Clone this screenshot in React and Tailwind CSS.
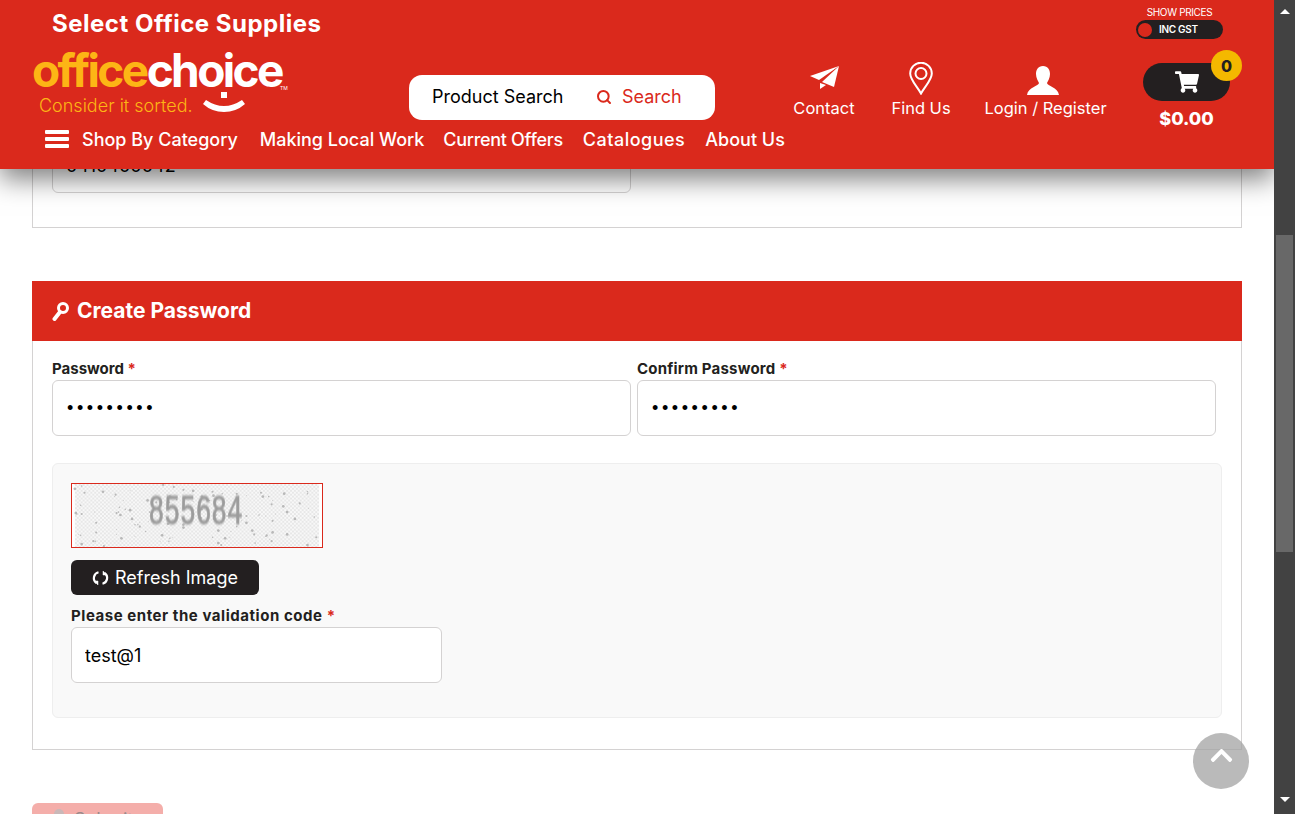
import { FaShoppingCart, FaChevronUp } from 'react-icons/fa';
import { Search } from 'lucide-react';

const font = "font-['Inter','Open_Sans',sans-serif]";

// seeded specks for the captcha noise
const specks = Array.from({ length: 120 }, (_, i) => ({
  x: (i * 97 + (i * i) % 41) % 252,
  y: (i * 53 + (i * i * 3) % 29) % 65,
  r: 0.5 + (i % 4) * 0.3,
}));

const Logo = () => (
  <div className="relative w-[262px] h-[66px] shrink-0">
    <div className="absolute left-0 top-[-8px] text-[46px] leading-[44px] font-bold tracking-[-2.6px] whitespace-nowrap">
      <span className="text-[#fdb515]">office</span>
      <span className="text-white">choice</span>
    </div>
    <span className="absolute left-[248px] top-[29px] text-[5px] leading-[6px] text-white">TM</span>
    <div className="absolute left-[7px] top-[38px] text-[18px] leading-[24px] font-light text-[#fdb515] whitespace-nowrap">
      Consider it sorted.
    </div>
    <svg className="absolute left-[170px] top-[36px]" width="44" height="22" viewBox="0 0 44 22">
      <rect x="19" y="0" width="6" height="6" fill="#fff" />
      <path d="M4 8 Q22 20 40 8 L43 12 Q34 20 22 20 Q10 20 1 12 Z" fill="#fff" />
    </svg>
  </div>
);

const HeaderLink = ({ icon, label, className = '' }) => (
  <div className={`flex flex-col items-center text-white text-[16.5px] leading-[22px] ${className}`}>
    <div className="h-[32px] flex items-end justify-center">{icon}</div>
    <span className="mt-[1px] whitespace-nowrap">{label}</span>
  </div>
);

const Field = ({ label, type = 'text', value, className = '', labelClass = '' }) => (
  <div className={className}>
    <label className={`block text-[15px] leading-[22px] font-bold text-[#231f20] ${labelClass}`}>
      {label} <span className="text-[#da291c]">*</span>
    </label>
    <input
      readOnly
      type={type}
      value={value}
      className={
        type === 'password'
          ? "block w-full h-[56px] px-[14px] rounded-[6px] border border-[#d4d2d2] bg-white font-['Liberation_Sans',sans-serif] text-[18px] tracking-[3.6px] text-black outline-none"
          : 'block w-full h-[56px] px-[13px] rounded-[6px] border border-[#d4d2d2] bg-white text-[18px] text-black outline-none'
      }
    />
  </div>
);

const Captcha = () => (
  <svg className="block border border-[#da291c] bg-white" width="252" height="65" viewBox="0 0 252 65">
    <defs>
      <pattern id="grain" width="4" height="4" patternUnits="userSpaceOnUse">
        <rect width="4" height="4" fill="#f8f8f8" />
        <circle cx="1" cy="1" r="0.9" fill="#e0e0e0" />
        <circle cx="3" cy="3" r="0.9" fill="#e0e0e0" />
      </pattern>
      <filter id="soft"><feGaussianBlur stdDeviation="0.6" /></filter>
    </defs>
    <rect width="252" height="65" fill="url(#grain)" />
    {specks.map((s, i) => (
      <circle key={i} cx={s.x} cy={s.y} r={s.r} fill="#b8b8b8" />
    ))}
    <text
      transform="translate(76 41) scale(1 1.65)"
      filter="url(#soft)"
      fontFamily="'Liberation Mono', monospace"
      fontSize="27"
      fill="#9c9c9c"
      stroke="#9c9c9c"
      strokeWidth="0.6"
    >
      855684
    </text>
  </svg>
);

const Header = () => (
  <header className="absolute inset-x-0 top-0 h-[169px] bg-[#da291c] shadow-[0_10px_25px_rgba(0,0,0,0.5)] z-10">
    <div className="flex items-start justify-between h-[48px]">
      <h1 className="ml-[52px] mt-[9px] text-[24px] leading-[30px] font-bold text-white tracking-[0.5px]">Select Office Supplies</h1>
      <div className="mr-[51px] mt-[6px] w-[87px] flex flex-col items-center">
        <span className="text-[10px] leading-[12px] text-white tracking-[-0.35px] whitespace-nowrap">SHOW PRICES</span>
        <div className="mt-[2px] w-[87px] h-[19px] rounded-full bg-[#231f20] flex items-center pl-[2px]">
          <span className="w-[14px] h-[14px] rounded-full bg-[#da291c]" />
          <span className="ml-[7px] text-[10px] font-semibold text-white tracking-[-0.3px]">INC GST</span>
        </div>
      </div>
    </div>

    <div className="flex items-start h-[78px]">
      <div className="ml-[32px] mt-[8px]"><Logo /></div>
      <div className="ml-[115px] mt-[27px] w-[306px] h-[45px] rounded-[13px] bg-white flex items-center text-[18px] shrink-0 pb-[2px]">
        <span className="ml-[23px] w-[164px] text-black whitespace-nowrap">Product Search</span>
        <Search className="text-[#da291c]" size={16} strokeWidth={3} />
        <span className="ml-[10px] text-[#da291c]">Search</span>
      </div>
      <HeaderLink
        className="ml-[77px] mt-[16px] w-[64px]"
        label="Contact"
        icon={
          <svg className="mb-[5px]" width="31" height="26" viewBox="0 0 31 26" fill="#fff">
            <path d="M30 1 L1 11 L10 15 Z" />
            <path d="M30 1 L13 17 L25 22 Z" />
            <path d="M11 18 L11 24 L17 20 Z" />
          </svg>
        }
      />
      <HeaderLink
        className="ml-[38px] mt-[16px] w-[54px]"
        label="Find Us"
        icon={
          <svg className="mb-[1px]" width="24" height="33" viewBox="0 0 24 33" fill="none" stroke="#fff" strokeWidth="2">
            <path d="M12 31.5 C8 24 1.2 18 1.2 11.5 A10.8 10.8 0 0 1 22.8 11.5 C22.8 18 16 24 12 31.5 Z" />
            <circle cx="12" cy="11.5" r="5.5" />
          </svg>
        }
      />
      <HeaderLink
        className="ml-[37px] mt-[16px] w-[121px]"
        label="Login / Register"
        icon={
          <svg className="mb-[1px] mr-[6px]" width="32" height="29" viewBox="0 0 32 29" fill="#fff">
            <path d="M16 0 C21 0 23 4 23 8 C23 12 21 15 20 17 C20 20 31 21 32 29 H0 C1 21 12 20 12 17 C11 15 9 12 9 8 C9 4 11 0 16 0 Z" />
          </svg>
        }
      />
      <div className="relative ml-[37px] mt-[15px] w-[87px] flex flex-col items-center shrink-0">
        <div className="w-[87px] h-[38px] rounded-full bg-[#231f20] flex items-center justify-center text-white">
          <FaShoppingCart size={24} />
        </div>
        <span className="mt-[3px] text-[18px] leading-[30px] font-extrabold text-white">$0.00</span>
        <span className="absolute right-[-12px] top-[-13px] w-[31px] h-[31px] rounded-full bg-[#f4b800] flex items-center justify-center text-[16px] font-extrabold text-[#231f20]">0</span>
      </div>
    </div>

    <nav className="flex items-center h-[26px] text-white text-[18px] font-medium whitespace-nowrap">
      <svg className="ml-[45px]" width="24" height="18" viewBox="0 0 24 18" fill="#fff">
        <rect width="24" height="4" y="0" rx="1" />
        <rect width="24" height="4" y="7" rx="1" />
        <rect width="24" height="4" y="14" rx="1" />
      </svg>
      <span className="ml-[13px]">Shop By Category</span>
      <span className="ml-[22px]">Making Local Work</span>
      <span className="ml-[19px] tracking-[-0.3px]">Current Offers</span>
      <span className="ml-[20px] tracking-[0.5px]">Catalogues</span>
      <span className="ml-[20px]">About Us</span>
    </nav>
  </header>
);

const Scrollbar = () => (
  <div className="w-[21px] h-full bg-[#424242] flex flex-col items-center shrink-0">
    <span className="mt-[9px] w-0 h-0 border-x-[5px] border-x-transparent border-b-[5px] border-b-white" />
    <div className="mt-[221px] w-[17px] h-[317px] bg-[#686868]" />
    <span className="mt-[245px] w-0 h-0 border-x-[5px] border-x-transparent border-t-[5px] border-t-white" />
  </div>
);

export default function App() {
  return (
    <div className={`${font} flex w-[1295px] h-[814px] overflow-hidden bg-white`}>
      <div className="relative flex-1 h-full overflow-hidden">
        <Header />

        <main className="pt-[100px] px-[32px] w-[1274px]">
          <section className="border border-[#d4d2d2] h-[128px] pl-[19px] pt-[36px]">
            <input
              readOnly
              value="0410400042"
              className="block w-[579px] h-[56px] px-[13px] rounded-[6px] border border-[#d4d2d2] bg-white text-[18px] text-black outline-none"
            />
          </section>

          <section className="mt-[53px] border border-t-0 border-[#d4d2d2] pb-[31px]">
            <div className="-mx-px h-[60px] bg-[#da291c] flex items-center pl-[20px] text-white">
              <svg width="17" height="19" viewBox="0 0 17 19" fill="none" stroke="#fff">
                <circle cx="11" cy="6" r="4.5" strokeWidth="3" />
                <path d="M8 10 L2.5 17" strokeWidth="4" strokeLinecap="round" />
              </svg>
              <h2 className="ml-[8px] text-[21px] font-bold">Create Password</h2>
            </div>
            <div className="px-[19px] pt-[17px]">
              <div className="grid grid-cols-2">
                <Field className="pr-[6px]" label="Password" type="password" value="test@1234" />
                <Field className="pr-[6px]" labelClass="tracking-[0.2px]" label="Confirm Password" type="password" value="test@1234" />
              </div>
              <div className="mt-[27px] h-[255px] rounded-[6px] border border-[#eeeeee] bg-[#f9f9f9] pl-[18px] pt-[19px]">
                <Captcha />
                <button className="mt-[12px] w-[188px] h-[35px] rounded-[6px] bg-[#231f20] text-white text-[18px] flex items-center justify-center gap-[6px]">
                  <svg width="17" height="16" viewBox="0 0 16 16" fill="none" stroke="#fff" strokeWidth="2.2">
                    <path d="M6 2.2 A6 6 0 0 0 4 13" />
                    <path d="M10 13.8 A6 6 0 0 0 12 3" />
                    <path d="M1.5 11 L5.5 11 L5.5 15 Z" fill="#fff" strokeWidth="0.5" />
                    <path d="M14.5 5 L10.5 5 L10.5 1 Z" fill="#fff" strokeWidth="0.5" />
                  </svg>
                  Refresh Image
                </button>
                <Field className="mt-[10px] w-[371px]" labelClass="tracking-[0.55px]" label="Please enter the validation code" value="test@1" />
              </div>
            </div>
          </section>

          <button className="mt-[53px] w-[131px] h-[44px] rounded-[6px] bg-[#f4aeaa] text-[#9a8a8a] text-[18px] flex items-start gap-[10px] pl-[22px] pt-[3px]">
            <span className="mt-[3px] w-[10px] h-[14px] rounded-full bg-[#c9b8b8]" />
            Submit
          </button>
        </main>

        <button className="absolute left-[1193px] top-[733px] w-[56px] h-[56px] rounded-full bg-[#a3a3a3]/75 flex items-start justify-center pt-[10px] text-white z-10">
          <FaChevronUp size={25} />
        </button>
      </div>
      <Scrollbar />
    </div>
  );
}
